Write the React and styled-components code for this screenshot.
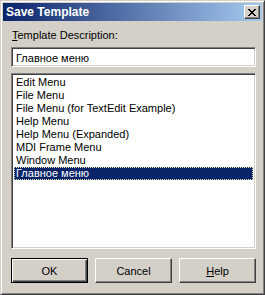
import React, { useState } from "react";
import styled, { createGlobalStyle } from "styled-components";

const GlobalStyle = createGlobalStyle`
  html, body {
    margin: 0;
    padding: 0;
    background: #d4d0c8;
  }
  * {
    box-sizing: border-box;
  }
`;

const Window = styled.div`
  width: 265px;
  height: 295px;
  display: flex;
  flex-direction: column;
  background: #d4d0c8;
  border: 1px solid;
  border-color: #d4d0c8 #404040 #404040 #d4d0c8;
  box-shadow: inset 1px 1px #ffffff, inset -1px -1px #808080;
  padding: 2px;
  font-family: "Liberation Sans", Arial, sans-serif;
  font-size: 11px;
  color: #000;
`;

const TitleBar = styled.div`
  height: 18px;
  display: flex;
  align-items: center;
  justify-content: space-between;
  padding: 0 2px 0 2px;
  background: linear-gradient(to right, #0a246a, #a6caf0);
`;

const Title = styled.span`
  color: #fff;
  font-weight: bold;
  font-size: 12px;
  line-height: 18px;
  padding-left: 1px;
`;

const CloseButton = styled.div`
  width: 16px;
  height: 14px;
  display: flex;
  align-items: center;
  justify-content: center;
  background: #d4d0c8;
  border: 1px solid;
  border-color: #ffffff #404040 #404040 #ffffff;
  box-shadow: inset -1px -1px #808080;
`;

const Body = styled.div`
  flex: 1;
  display: flex;
  flex-direction: column;
  padding: 8px 6px 9px 8px;
`;

const Label = styled.div`
  height: 13px;
  line-height: 13px;
  margin-bottom: 5px;
  padding-left: 1px;
`;

const Key = styled.span`
  text-decoration: underline;
`;

const Sunken = styled.div`
  width: 245px;
  background: #fff;
  border: 1px solid;
  border-color: #808080 #ffffff #ffffff #808080;
  box-shadow: inset 1px 1px #404040, inset -1px -1px #d4d0c8;
`;

const TextBox = styled(Sunken)`
  height: 20px;
  line-height: 16px;
  padding: 2px 4px;
  margin-bottom: 6px;
`;

const ListBox = styled(Sunken)`
  height: 176px;
  padding: 2px;
  margin-bottom: 9px;
`;

const Item = styled.div`
  height: 13px;
  line-height: 13px;
  padding-left: 2px;
  white-space: nowrap;
  color: ${(p) => (p.$selected ? "#fff" : "#000")};
  background: ${(p) => (p.$selected ? "#0a246a" : "transparent")};
  outline: ${(p) => (p.$selected ? "1px dotted #e8e4b0" : "none")};
  outline-offset: -1px;
`;

const Buttons = styled.div`
  display: flex;
  gap: 7px;
`;

const Button = styled.div`
  width: 77px;
  height: 25px;
  display: flex;
  align-items: center;
  justify-content: center;
  background: #d4d0c8;
  border: 1px solid;
  border-color: ${(p) =>
    p.$default ? "#000" : "#ffffff #404040 #404040 #ffffff"};
  box-shadow: ${(p) =>
    p.$default
      ? "inset 1px 1px #ffffff, inset -1px -1px #404040, inset -2px -2px #808080"
      : "inset -1px -1px #808080"};
`;

const items = [
  "Edit Menu",
  "File Menu",
  "File Menu (for TextEdit Example)",
  "Help Menu",
  "Help Menu (Expanded)",
  "MDI Frame Menu",
  "Window Menu",
  "Главное меню",
];

export default function App() {
  const [selected, setSelected] = useState(7);
  return (
    <>
      <GlobalStyle />
      <Window>
        <TitleBar>
          <Title>Save Template</Title>
          <CloseButton>
            <svg width="8" height="7" viewBox="0 0 8 7">
              <path
                d="M0 0h2v1h1v1h2v-1h1v-1h2v1h-1v1h-1v1h-1v1h1v1h1v1h1v1h-2v-1h-1v-1h-2v1h-1v1h-2v-1h1v-1h1v-1h1v-1h-1v-1h-1v-1h-1z"
                fill="#000"
              />
            </svg>
          </CloseButton>
        </TitleBar>
        <Body>
          <Label>
            <Key>T</Key>emplate Description:
          </Label>
          <TextBox>Главное меню</TextBox>
          <ListBox>
            {items.map((it, i) => (
              <Item
                key={it}
                $selected={i === selected}
                onClick={() => setSelected(i)}
              >
                {it}
              </Item>
            ))}
          </ListBox>
          <Buttons>
            <Button $default>OK</Button>
            <Button>Cancel</Button>
            <Button>
              <span>
                <Key>H</Key>elp
              </span>
            </Button>
          </Buttons>
        </Body>
      </Window>
    </>
  );
}
